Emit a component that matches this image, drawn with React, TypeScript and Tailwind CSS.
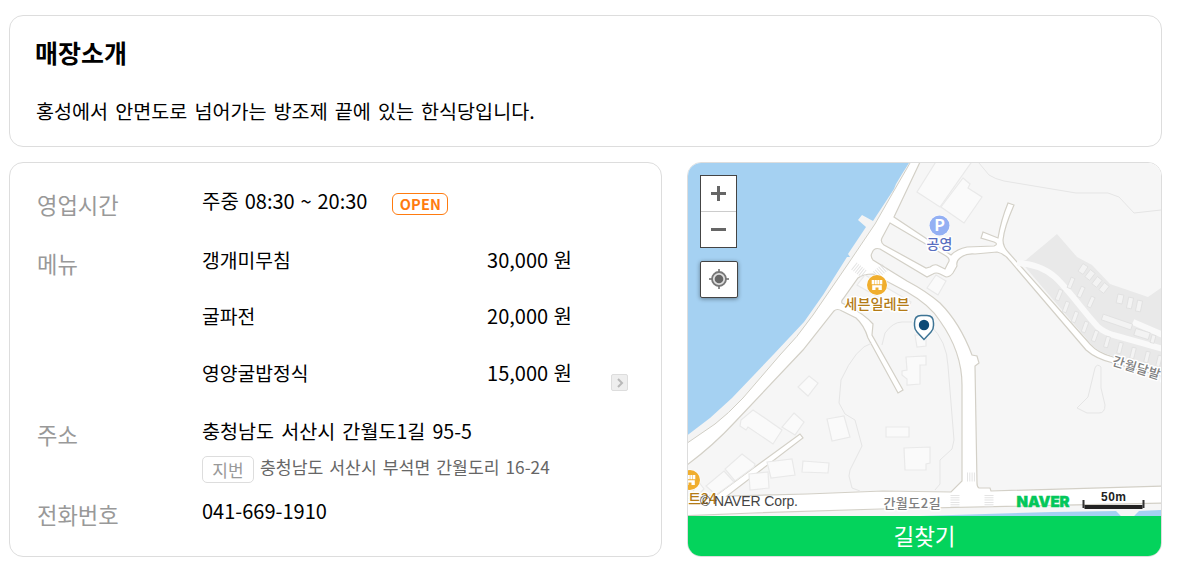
import type { ReactNode } from "react";

const menus = [
  { name: "갱개미무침", price: "30,000 원" },
  { name: "굴파전", price: "20,000 원" },
  { name: "영양굴밥정식", price: "15,000 원" },
];

// outlined blocks between the roads
const blocks = [
  "M921 160 L894 217 L951 255 Q957 249 967 247 L994 246 Q999 244 994 242 L981 238 L983 232 L998 238 Q1001 220 1008 203 L1014 205 Q1004 228 1003 240 Q1003 247 1009 253 L1090 344 Q1098 353 1113 357 L1165 372 V160 Z",
  "M890 223 L946 256 Q951 259 948 263 L945 269 L937 265 Q934 264 930 267 L926 268 L884 245 Q880 242 882 238 Z",
  "M873 260 Q870 256 872 253 Q874 247 880 249 L927 277 L933 274 Q936 272 940 274 L946 277 Q950 277 953 273 L957 266 Q956 261 960 258 Q966 253 975 254 L997 252 Q1005 254 1010 261 L1086 350 Q1096 359 1113 363 L1165 377 V486 L991 491 L990 488 L979 488 Q977 487 977 483 L975 366 L979 363 L977 356 L972 355 Q960 323 940 303 Q926 291 907 281 Z",
  "M842 303 Q841 301 843 299 L858 278 Q863 274 873 274 L907 292 Q930 305 940 321 Q962 352 962 385 V481 L951 492 L883 491 L807 494 L727 496 L803 438 L800 434 L718 494 L680 501 V470 Q710 449 735 422 L803 350 L834 311 Q837 308 842 311 L856 318 Q864 325 868 338 L898 393 L903 390 L872 335 L873 324 Q864 314 850 307 Z",
  "M680 516 L753 513 L880 509 L1165 503 V525 H680 Z",
];

// buildings
const buildings = [
  "M937 160 L917 192 L940 207 L973 160 Z",
  "M963 178 L970 184 L968 188 L982 197 L964 223 L941 207 Z",
  "M936 275 L946 281 L938 295 L927 288 Z",
  "M865 275 L911 302 L906 313 L857 285 Z",
  "M915 335 H926 V346 L917 347 Z",
  "M906 357 L926 356 V365 H920 V384 L907 385 V379 L902 375 V371 L907 370 Z",
  "M886 427 H909 V437 H886 Z",
  "M904 448 L930 447 V463 L926 464 V470 L905 470 Z",
  "M809 376 L818 383 L808 396 L798 387 Z",
  "M753 410 L759 414 L782 430 L773 444 L748 427 L746 430 L740 426 L741 420 Z",
  "M794 413 L804 422 L795 435 L782 427 Z",
  "M827 419 L844 416 L850 437 L832 441 Z",
  "M767 462 L792 459 L795 475 L771 478 Z",
  "M803 461 L829 463 L828 473 L802 472 Z",
  "M742 454 L755 464 L754 467 L735 481 L725 469 Z",
  "M724 471 L734 482 L716 495 L706 486 Z",
  "M749 474 L768 472 L769 488 L750 490 Z",
  "M698 481 L704 489 L699 494 L693 492 Z",
];

// pale outlines of lots and contour lines
const contours = [
  "M979 163 L989 175 Q995 179 1004 181 L1076 193 H1108 L1119 197 L1134 213 L1161 210",
  "M872 343 Q856 347 841 380 L839 403 L845 414 L855 420 L862 446 L850 470 L849 476 L852 488 L860 491",
  "M882 345 L885 333 Q893 322 902 322 H912 M930 325 Q947 341 948 366 L954 440 L952 449 L940 460 V484 L935 490",
  "M1095 368 Q1097 363 1101 367 V388 L1105 405 Q1105 413 1099 413 L1087 413 L1077 408 L1088 397 Z",
];

// [x, y, width, height, angle] of the small lots on the grey hill
const lots = [
  [1083, 269, 6, 9, 33], [1090, 275, 6, 9, 38], [1097, 282, 6, 9, 38], [1104, 288, 6, 9, 38],
  [1120, 299, 6, 9, 12], [1130, 303, 5, 11, 12], [1139, 306, 5, 11, 12],
  [1071, 283, 4, 11, 22], [1081, 292, 4, 11, 24], [1091, 302, 4, 11, 24],
  [1059, 295, 4, 11, 22], [1066, 307, 4, 11, 20], [1075, 317, 4, 11, 20],
  [1085, 327, 4, 11, 20], [1095, 336, 4, 11, 20], [1107, 342, 4, 11, 16],
  [1120, 348, 4, 11, 14], [1133, 353, 4, 11, 14], [1147, 357, 4, 11, 14], [1159, 361, 4, 11, 14],
  [1117, 322, 31, 6, 19], [1142, 334, 15, 7, 17], [1153, 339, 4, 8, 15],
];

function StoreMarker({ x, y }: { x: number; y: number }) {
  return (
    <g transform={`translate(${x} ${y})`}>
      <circle r="10.5" fill="#fff" />
      <circle r="10" fill="#f0ae2e" />
      <path d="M-5.3 -5 H-2.8 V-.8 H-5.3 Z M-2.3 -5 H-.2 V-.8 H-2.3 Z M.3 -5 H2.4 V-.8 H.3 Z M2.9 -5 H5.3 V-.8 H2.9 Z" fill="#fff" />
      <path d="M-4.8 .3 H4.8 V5 H1.5 V2.4 H-1.5 V5 H-4.8 Z" fill="#fff" />
    </g>
  );
}

function StoreMap() {
  return (
    <svg viewBox="688 163 473 353" className="block h-[353px] w-[473px]" fontFamily="'Noto Sans CJK KR', sans-serif">
      <rect x="688" y="163" width="473" height="353" fill="#fff" />
      <path
        d="M680 155 H914 L910 163 Q892 194 875 224 L848 264 L813 315 Q797 338 780 355 L743 398 Q728 414 715 424 L680 448 Z"
        fill="#f4f4f4"
        stroke="#d0cec5"
      />
      <path
        d="M680 155 H912 L909 163 L902 174 L896 184 L894 189 L873 221 L862 215 L858 220 L866 227 L848 254 L850 257 L847 257 L823 295 L804 322 L773 355 L732 398 L710 418 L680 441 Z"
        fill="#a5d1f2"
      />
      {blocks.map((d) => (
        <path key={d} d={d} fill="#f6f6f6" stroke="#d3d0c7" strokeWidth="1.200" />
      ))}
      <path d="M920 516 L1052 512 L1117 511 L1122 517 H1133 L1138 511 L1161 510 V516 Z" fill="#a5d1f2" />
      <path d="M1116 511 H1139 L1133 517 H1122 Z" fill="#f6f6f6" />
      <g fill="#fafafa" stroke="#e9e9e9" strokeWidth="1.200">
        {buildings.map((d) => (
          <path key={d} d={d} />
        ))}
      </g>
      <g fill="none" stroke="#e5e5e5">
        {contours.map((d) => (
          <path key={d} d={d} />
        ))}
      </g>

      <path
        d="M1021 262 L1026 260 L1057 234 L1077 257 L1092 265 L1110 284 L1148 297 L1161 288 V371 L1113 356 Q1097 352 1091 344 Z"
        fill="#e9e9e9"
      />
      <g fill="none" stroke="#f9f9f9" strokeWidth="6">
        <path d="M1017 263 Q1040 264 1055 277 C1069 290 1083 311 1098 327 Q1104 332 1113 335 L1163 349" />
        <path d="M1133 322 L1163 335" />
      </g>
      <g fill="#f3f3f3" stroke="#dfdfdf" strokeWidth=".8">
        {lots.map(([x, y, w, h, angle], i) => (
          <rect key={i} x={x - w / 2} y={y - h / 2} width={w} height={h} transform={`rotate(${angle} ${x} ${y})`} />
        ))}
      </g>

      {/* crosswalks */}
      <g fill="none" stroke="#e4e4e4" strokeWidth="9" strokeDasharray="1 1.3">
        <path d="M854 266 L864 274" />
        <path d="M876 275 L885 267" />
        <path d="M967 477 H976" />
        <path d="M955 495 V507" />
        <path d="M989 495 V507" />
      </g>

      <circle cx="939.500" cy="225.500" r="10.5" fill="#fff" />
      <circle cx="939.500" cy="225.500" r="10" fill="#94b0f3" />
      <text x="939.7" y="231.300" textAnchor="middle" fontSize="16" fontWeight="700" fill="#fff">P</text>
      <StoreMarker x={877} y={285} />
      <StoreMarker x={690} y={480} />

      <g strokeLinejoin="round" strokeWidth="3" stroke="#fff" paintOrder="stroke" fontWeight="500">
        <text x="939.500" y="249" textAnchor="middle" fontSize="14" fill="#596fc0">공영</text>
        <text x="877" y="309" textAnchor="middle" fontSize="14.200" fill="#b37b16">세븐일레븐</text>
        <text x="717" y="504" textAnchor="end" fontSize="14" fill="#b37b16">마트24</text>
        <text x="912.300" y="507.500" textAnchor="middle" fontSize="13" letterSpacing=".5" fill="#808080">간월도2길</text>
        <text transform="translate(1111.500 365) rotate(17)" fontSize="13" letterSpacing=".5" fill="#808080">간월달발길</text>
      </g>

      <path
        d="M924 339.500 L917 332 Q914.500 329.500 914.500 325.500 V323 Q914.500 315.500 921 315.500 H927 Q933.500 315.500 933.500 323 V325.500 Q933.500 329.500 931 332 Z"
        fill="#fff"
        stroke="#3d7495"
        strokeWidth="1.500"
      />
      <circle cx="924" cy="325" r="5.200" fill="#0d4a77" />

      <text x="700" y="506" fontSize="14" fill="#444" fontFamily="'Liberation Sans', Arial, sans-serif" textLength="98">
        © NAVER Corp.
      </text>
      <text
        x="1016.500"
        y="506.500"
        fontSize="14.500"
        fontWeight="900"
        fontFamily="Inter, sans-serif"
        fill="#03c75a"
        stroke="#03c75a"
        strokeWidth=".4"
        textLength="53"
        lengthAdjust="spacingAndGlyphs"
      >
        NAVER
      </text>
      <g fill="none">
        <path d="M1083.500 500 V508 M1143.500 500 V508" stroke="#333" strokeWidth="2" />
        <path d="M1084.500 507 H1142.500" stroke="#222" strokeWidth="4" />
      </g>
      <text x="1113.500" y="501" textAnchor="middle" fontSize="12" fontWeight="700" fill="#222" stroke="#fff" strokeWidth="2" paintOrder="stroke" fontFamily="'Liberation Sans', Arial, sans-serif" textLength="25">
        50m
      </text>
    </svg>
  );
}

function Label({ children }: { children: ReactNode }) {
  return <dt className="w-[165px] shrink-0 pt-[2.500px] text-[22.200px] leading-8 text-[#999]">{children}</dt>;
}

export default function App() {
  return (
    <div className="h-[573px] w-[1178px] bg-white pt-[15px] pl-[9px] font-['Noto_Sans_CJK_KR',sans-serif] text-black">
      <section className="h-[132px] w-[1153px] rounded-[14px] border border-[#ddd] px-[25px] pt-[18px]">
        <h2 className="text-[25px] leading-9 font-bold">매장소개</h2>
        <p className="mt-[27px] pl-px text-[19.600px] leading-7 [word-spacing:2.7px]">
          홍성에서 안면도로 넘어가는 방조제 끝에 있는 한식당입니다.
        </p>
      </section>

      <div className="mt-[15px] flex gap-[25px]">
        <dl className="h-[395px] w-[653px] rounded-[14px] border border-[#ddd] pt-[22px] pl-[27px]">
          <div className="flex h-[59px]">
            <Label>영업시간</Label>
            <dd className="flex items-start">
              <span className="text-[20px] leading-8 [word-spacing:1.4px]">주중 08:30 ~ 20:30</span>
              <span className="mt-2 ml-[25px] flex h-[22px] w-14 items-center justify-center rounded-md border border-[#ff7b0f] text-[14.500px] font-bold tracking-[.2px] text-[#ff7b0f]">
                OPEN
              </span>
            </dd>
          </div>

          <div className="flex h-[171px]">
            <Label>메뉴</Label>
            <dd className="flex">
              <ul className="w-[370px] space-y-[24.300px]">
                {menus.map((menu) => (
                  <li key={menu.name} className="flex justify-between leading-8">
                    <span className="text-[19.300px]">{menu.name}</span>
                    <span className="text-[20px] [word-spacing:1px]">{menu.price}</span>
                  </li>
                ))}
              </ul>
              <button className="mt-[130px] ml-[39px] flex size-[17px] items-center justify-center rounded-[2px] border border-[#ddd] bg-[#eee]">
                <svg viewBox="0 0 10 10" className="size-[10px]">
                  <path d="M3 1 L7 5 L3 9" fill="none" stroke="#b8b8b8" strokeWidth="2" />
                </svg>
              </button>
            </dd>
          </div>

          <div className="flex h-20">
            <Label>주소</Label>
            <dd>
              <p className="text-[19.600px] leading-8 [word-spacing:2.7px]">충청남도 서산시 간월도1길 95-5</p>
              <p className="mt-[7px] flex items-start">
                <span className="mt-[2px] mr-[6px] flex h-[27px] w-[52px] items-center justify-center rounded-[5px] border border-[#ddd] text-[17px] text-[#999]">
                  지번
                </span>
                <span className="text-[17.200px] leading-[26px] text-[#666] [word-spacing:2.2px]">
                  충청남도 서산시 부석면 간월도리 16-24
                </span>
              </p>
            </dd>
          </div>

          <div className="flex">
            <Label>전화번호</Label>
            <dd className="text-[20px] leading-8">041-669-1910</dd>
          </div>
        </dl>

        <section className="h-[395px] w-[475px] overflow-hidden rounded-[14px] border border-[#ddd]">
          <div className="relative">
            <StoreMap />
            <div className="absolute top-3 left-3">
              <div className="h-[73px] w-[37px] border border-[#444] bg-white">
                <button className="flex h-9 w-full items-center justify-center border-b border-[#ccc]">
                  <svg viewBox="0 0 15 15" className="size-[15px]">
                    <path d="M0 7.500 H15 M7.500 0 V15" stroke="#666" strokeWidth="3" />
                  </svg>
                </button>
                <button className="flex h-[35px] w-full items-center justify-center">
                  <svg viewBox="0 0 15 15" className="size-[15px]">
                    <path d="M0 7.500 H15" stroke="#666" strokeWidth="3" />
                  </svg>
                </button>
              </div>
              <button className="mt-[13px] flex h-[37px] w-[38px] items-center justify-center rounded-[2px] border border-[#444] bg-white pb-px shadow-[0_1px_4px_rgba(0,0,0,0.4)]">
                <svg viewBox="0 0 20 20" className="size-5">
                  <path d="M10 0 V4 M10 16 V20 M0 10 H4 M16 10 H20" stroke="#8c8c8c" strokeWidth="2" />
                  <circle cx="10" cy="10" r="7" fill="#dedede" stroke="#777" strokeWidth="1.800" />
                  <circle cx="10" cy="10" r="4.300" fill="#666" />
                </svg>
              </button>
            </div>
          </div>
          <button className="flex h-10 w-full items-center justify-center bg-[#04d35c] pb-[2px] text-[22.500px] leading-[38px] text-white">
            길찾기
          </button>
        </section>
      </div>
    </div>
  );
}
